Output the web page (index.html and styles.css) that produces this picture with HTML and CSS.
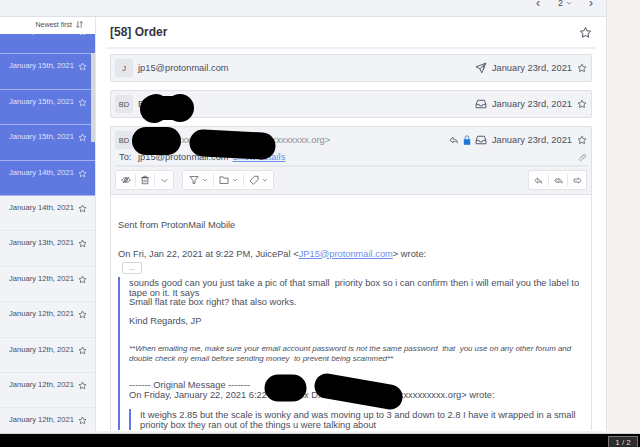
FILE: index.html
```html
<!DOCTYPE html>
<html lang="en">
<head>
  <meta charset="UTF-8" />
  <meta name="viewport" content="width=device-width, initial-scale=1.0"/>
  <title>[58] Order</title>
  <link rel="stylesheet" href="styles.css">
</head>
<body>

<svg class="defs" width="0" height="0" aria-hidden="true">
  <symbol id="i-star" viewBox="0 0 16 16"><path d="M8 1.8l1.9 4 4.4.6-3.2 3 .8 4.4L8 11.7l-3.900 2.100.8-4.400-3.200-3 4.400-.6z"/></symbol>
  <symbol id="i-plane" viewBox="0 0 16 16"><path d="M14.500 1.500L1.500 6.500l5 2.500 2.500 5.500zM6.500 9l8-7.500M11.500 4.500v5"/></symbol>
  <symbol id="i-inbox" viewBox="0 0 16 16"><path d="M1.500 8.500l2-5.500h9l2 5.500v4.500h-13zM1.500 8.500h4l1 2h3l1-2h4"/></symbol>
  <symbol id="i-reply" viewBox="0 0 16 16"><path d="M6.500 3.500L1.500 8l5 4.500V10c3 0 5 .5 7 2.500 0-3.500-2.500-6-7-6z"/></symbol>
  <symbol id="i-replyall" viewBox="0 0 16 16"><path d="M5 4L1 8l4 4M8.500 3.500L4 8l4.500 4.500V10c2.500 0 4 .5 6 2.500 0-3.500-2-6-6-6z"/></symbol>
  <symbol id="i-forward" viewBox="0 0 16 16"><path d="M9.500 3.500l5 4.500-5 4.500V10.500H2v-5h7.500z"/></symbol>
  <symbol id="i-clip" viewBox="0 0 16 16"><path d="M13.500 3c-1.500-1.500-3-1-4 0L3 9.500c-1.500 1.500-.5 4 1.500 4 .8 0 1.300-.3 2-1L13 6c1-1 1.500-1.800.5-3zM6 6.500l4 4M8.500 4l4 4"/></symbol>
  <symbol id="i-eye" viewBox="0 0 16 16"><path d="M1 8c3.500-5 10.500-5 14 0-3.500 5-10.500 5-14 0zM3 13L13 3"/><circle cx="8" cy="8" r="2.200"/></symbol>
  <symbol id="i-trash" viewBox="0 0 16 16"><path d="M3.500 4.500h9V14h-9zM2 4h12M6 4V2h4v2M6.500 7.500v4M9.500 7.500v4"/></symbol>
  <symbol id="i-chev" viewBox="0 0 16 16"><path d="M3 5.500l5 5 5-5"/></symbol>
  <symbol id="i-filter" viewBox="0 0 16 16"><path d="M1.500 2.500h13L9.500 9v4.500h-3V9z"/></symbol>
  <symbol id="i-folder" viewBox="0 0 16 16"><path d="M1.500 3h5l1.500 2h6.500v8.500h-13z"/></symbol>
  <symbol id="i-label" viewBox="0 0 16 16"><path d="M1.500 9.500L9 2h5.500v5.500L7 15zM11.500 4.500h.1"/></symbol>
  <symbol id="i-sort" viewBox="0 0 16 16"><path d="M5 2v11M2.500 10.500L5 13.500l2.500-3M11 14V3M8.500 5.500L11 2.500l2.500 3"/></symbol>
</svg>

<div class="app">
  <div class="window">
    <div class="topbar">
      <span class="nav">&#8249;</span>
      <span class="page-num">2 <svg class="ico ico-xs"><use href="#i-chev"/></svg></span>
      <span class="nav">&#8250;</span>
    </div>

    <div class="columns">
      <aside class="sidebar">
        <div class="sort">Newest first <svg class="ico ico-sm"><use href="#i-sort"/></svg></div>
        <div class="list">
          <div class="rows">
            <div class="row sel"><span>January 15th, 2021</span><svg class="ico ico-sm"><use href="#i-star"/></svg></div>
            <div class="row sel"><span>January 15th, 2021</span><svg class="ico ico-sm"><use href="#i-star"/></svg></div>
            <div class="row sel"><span>January 15th, 2021</span><svg class="ico ico-sm"><use href="#i-star"/></svg></div>
            <div class="row sel"><span>January 15th, 2021</span><svg class="ico ico-sm"><use href="#i-star"/></svg></div>
            <div class="row sel"><span>January 14th, 2021</span><svg class="ico ico-sm"><use href="#i-star"/></svg></div>
            <div class="row"><span>January 14th, 2021</span><svg class="ico ico-sm"><use href="#i-star"/></svg></div>
            <div class="row"><span>January 13th, 2021</span><svg class="ico ico-sm"><use href="#i-star"/></svg></div>
            <div class="row"><span>January 12th, 2021</span><svg class="ico ico-sm"><use href="#i-star"/></svg></div>
            <div class="row"><span>January 12th, 2021</span><svg class="ico ico-sm"><use href="#i-star"/></svg></div>
            <div class="row"><span>January 12th, 2021</span><svg class="ico ico-sm"><use href="#i-star"/></svg></div>
            <div class="row"><span>January 12th, 2021</span><svg class="ico ico-sm"><use href="#i-star"/></svg></div>
            <div class="row"><span>January 12th, 2021</span><svg class="ico ico-sm"><use href="#i-star"/></svg></div>
          </div>
          <div class="list-thumb"></div>
        </div>
      </aside>

      <main class="conversation">
        <div class="subject">
          <h1>[58] Order</h1>
          <svg class="ico ico-lg"><use href="#i-star"/></svg>
        </div>

        <div class="messages">
          <section class="msg-head">
            <div class="avatar">J</div>
            <div class="sender">jp15@protonmail.com</div>
            <svg class="ico"><use href="#i-plane"/></svg>
            <div class="date">January 23rd, 2021</div>
            <svg class="ico ico-sm2"><use href="#i-star"/></svg>
          </section>

          <section class="msg-head">
            <div class="avatar">BD</div>
            <div class="sender">B</div>
            <svg class="ico"><use href="#i-inbox"/></svg>
            <div class="date">January 23rd, 2021</div>
            <svg class="ico ico-sm2"><use href="#i-star"/></svg>
          </section>

          <section class="msg-open">
            <div class="open-head">
              <div class="from-row">
                <div class="avatar">BD</div>
                <div class="sender muted">Bxxx Dxxxxxxr &lt;xxxxxxxxxxxxxxxxxxxxxx.org&gt;</div>
                <svg class="ico ico-sm2"><use href="#i-reply"/></svg>
                <svg class="lock" viewBox="0 0 10 12"><path class="lock-body" d="M1 5h8v7H1z"/><path class="lock-bow" d="M2.800 5V3a2.200 2.200 0 0 1 4.400 0v2"/></svg>
                <svg class="ico"><use href="#i-inbox"/></svg>
                <div class="date">January 23rd, 2021</div>
                <svg class="ico ico-sm2"><use href="#i-star"/></svg>
              </div>
              <div class="to-row">
                <span class="to-label">To:</span>
                <span class="sender">jp15@protonmail.com</span>
                <a class="link" href="#">Show details</a>
                <svg class="ico ico-clip"><use href="#i-clip"/></svg>
              </div>
              <div class="toolbar">
                <div class="btn-group">
                  <button><svg class="ico ico-sm2"><use href="#i-eye"/></svg></button>
                  <button><svg class="ico ico-sm2"><use href="#i-trash"/></svg></button>
                  <button><svg class="ico ico-xs2"><use href="#i-chev"/></svg></button>
                </div>
                <div class="btn-group">
                  <button class="wide"><svg class="ico ico-sm2"><use href="#i-filter"/></svg><svg class="ico ico-xs"><use href="#i-chev"/></svg></button>
                  <button class="wide"><svg class="ico ico-sm2"><use href="#i-folder"/></svg><svg class="ico ico-xs"><use href="#i-chev"/></svg></button>
                  <button class="wide"><svg class="ico ico-sm2"><use href="#i-label"/></svg><svg class="ico ico-xs"><use href="#i-chev"/></svg></button>
                </div>
                <div class="btn-group push">
                  <button><svg class="ico ico-xs2"><use href="#i-reply"/></svg></button>
                  <button><svg class="ico ico-xs2"><use href="#i-replyall"/></svg></button>
                  <button><svg class="ico ico-xs2"><use href="#i-forward"/></svg></button>
                </div>
              </div>
            </div>

            <div class="body">
              <p class="sent">Sent from ProtonMail Mobile</p>
              <p class="wrote">On Fri, Jan 22, 2021 at 9:22 PM, JuicePal &lt;<a class="link" href="#">JP15@protonmail.com</a>&gt; wrote:</p>
              <button class="more">...</button>
              <blockquote class="quote">
                <p>sounds good can you just take a pic of that small&nbsp; priority box so i can confirm then i will email you the label to tape on it. It says<br>Small flat rate box right? that also works.</p>
                <p class="regards">Kind Regards, JP</p>
                <p class="warning">**When emailing me, make sure your email account password is not the same password&nbsp; that&nbsp; you use on any other forum and double check my email before sending money&nbsp; to prevent being scammed**</p>
                <p class="orig">------- Original Message -------<br>On Friday, January 22, 2021 6:22 PM, Bxxx Dxxxxxxr &lt;xxxxxxxxxxxxxxxxxxx.org&gt; wrote:</p>
                <blockquote class="quote inner">
                  <p>It weighs 2.85 but the scale is wonky and was moving up to 3 and down to 2.8 I have it wrapped in a small priority box they ran out of the things u were talking about</p>
                </blockquote>
              </blockquote>
            </div>
          </section>
        </div>
        <div class="main-thumb"></div>
      </main>
    </div>
  </div>
  <div class="side-gap"></div>
</div>

<div class="pager"><span class="pager-box">1 / 2</span></div>

<!-- redaction scribbles drawn over the screenshot -->
<svg class="redact" viewBox="0 0 640 447" aria-hidden="true">
  <path stroke-width="28" d="M154 109L156 108M180 108h0"/>
  <path stroke-width="24" d="M156 108L180 108"/>
  <path stroke-width="28" d="M146 141L167 141"/>
  <path stroke-width="27" d="M203 143L262 146"/>
  <path stroke-width="27" d="M278 388L293 388"/>
  <path stroke-width="25" d="M327 386L390 397"/>
</svg>

</body>
</html>
```

FILE: styles.css
```css
* {
  box-sizing: border-box;
}

html, body {
  height: 100%;
}

body {
  margin: 0;
  position: relative;
  height: 447px;
  overflow: hidden;
  font-family: "Liberation Sans", Arial, sans-serif;
  font-size: 9.3px;
  color: #4b4e5b;
  background: #000;
}

p {
  margin: 0;
}

.defs {
  position: absolute;
}

.ico {
  width: 12px;
  height: 12px;
  flex: none;
  fill: none;
  stroke: #4b4e5b;
  stroke-width: 1.2;
}

.ico-xs { width: 6px; height: 6px; stroke-width: 1.6; }
.ico-xs2 { width: 9px; height: 9px; }
.ico-sm { width: 9px; height: 9px; }
.ico-sm2 { width: 10px; height: 10px; }
.ico-lg { width: 13px; height: 13px; }
.ico-clip { width: 9px; height: 9px; stroke: #8b8e9a; }

.app {
  display: flex;
  height: 434px;
  background: #f5f3f1;
  border-bottom: 1px solid #d8d6d2;
}

.window {
  width: 607px;
  height: 431px;
  display: flex;
  flex-direction: column;
  background: #fff;
  border-right: 1px solid #e4e5ea;
}

.side-gap {
  flex: 1;
}

.topbar {
  height: 17px;
  flex: none;
  display: flex;
  justify-content: flex-end;
  gap: 16px;
  padding-right: 11px;
  overflow: hidden;
  line-height: 6px;
  background: #f2f3f6;
  border-bottom: 1px solid #dde0e7;
}

.nav {
  font-size: 12px;
  width: 8px;
  text-align: center;
}

.page-num {
  width: 13px;
  display: flex;
  gap: 3px;
  font-size: 9px;
}

.columns {
  flex: 1;
  display: flex;
  min-height: 0;
}

.sidebar {
  width: 96px;
  flex: none;
  display: flex;
  flex-direction: column;
  border-right: 1px solid #e4e5ea;
}

.sort {
  height: 17px;
  flex: none;
  display: flex;
  justify-content: flex-end;
  align-items: flex-start;
  gap: 3px;
  padding: 3px 11px 0 0;
  font-size: 7px;
  line-height: 9px;
}

.list {
  flex: 1;
  position: relative;
  overflow: hidden;
  background: #f2f3f6;
}

.rows {
  margin-top: -15px;
}

.row {
  height: 35.4px;
  display: flex;
  justify-content: flex-end;
  gap: 4px;
  padding: 7px 8px 0 0;
  font-size: 7.6px;
  line-height: 9px;
  border-bottom: 1px solid #e7e8ec;
}

.row svg {
  margin-top: 1px;
}

.row.sel {
  background: #5f79e1;
  color: #dde3fa;
  border-bottom-color: #a3b2ee;
}

.row.sel .ico {
  stroke: #e6eafb;
}

.list-thumb {
  position: absolute;
  right: 0;
  top: 19px;
  width: 4px;
  height: 89px;
  background: #d5d7dd;
}

.conversation {
  flex: 1;
  position: relative;
  min-width: 0;
  padding: 0 10px;
}

.subject {
  height: 32px;
  display: flex;
  justify-content: space-between;
  align-items: center;
  padding: 0 4px;
  border-bottom: 2px solid #eff0f3;
}

.subject h1 {
  margin: 0;
  font-size: 12px;
  font-weight: bold;
  color: #33353f;
}

.messages {
  padding: 5px 4px 0;
}

.msg-head {
  height: 28px;
  margin-bottom: 8px;
  display: flex;
  align-items: center;
  gap: 4px;
  padding: 0 4px;
  background: #f2f3f6;
  border: 1px solid #dfe1e8;
  border-radius: 2px;
}

.avatar {
  width: 18px;
  height: 18px;
  flex: none;
  display: flex;
  align-items: center;
  justify-content: center;
  font-size: 7.5px;
  background: #e6e7ec;
  border-radius: 2px;
}

.sender {
  flex: 1;
  margin-left: 1px;
}

.muted {
  color: #8b8e9a;
}

.date {
  margin: 0 1px;
}

.msg-open {
  height: 304px;
  border: 1px solid #dfe1e8;
  border-bottom: 0;
  overflow: hidden;
}

.open-head {
  background: #f2f3f6;
  padding: 4px 4px 0;
  border-bottom: 1px solid #dfe1e8;
}

.from-row {
  height: 18px;
  display: flex;
  align-items: center;
  gap: 4px;
}

.lock {
  width: 8px;
  height: 10px;
}

.lock-body {
  fill: #1a78d6;
}

.lock-bow {
  fill: none;
  stroke: #1a78d6;
}

.to-row {
  height: 18px;
  display: flex;
  align-items: center;
  border-bottom: 2px solid #e6e7ec;
}

.to-label {
  width: 23px;
  padding-left: 4px;
}

.to-row .sender {
  flex: none;
  margin: 0 4px 0 0;
}

.to-row .ico-clip {
  margin-left: auto;
}

.link {
  color: #6f8cf0;
  text-decoration: underline;
}

.to-row .link {
  flex: 1;
}

.toolbar {
  height: 27px;
  display: flex;
  align-items: flex-start;
  gap: 8px;
  padding-top: 3px;
}

.btn-group {
  height: 20px;
  display: flex;
  align-items: center;
  padding: 0 0;
  background: #fff;
  border: 1px solid #e2e4ea;
  border-radius: 2px;
}

.btn-group.push {
  margin-left: auto;
}

.btn-group button {
  width: 19px;
  height: 12px;
  display: flex;
  align-items: center;
  justify-content: center;
  gap: 3px;
  padding: 0;
  background: none;
  border: 0;
  border-left: 1px solid #e6e7ec;
}

.btn-group button:first-child {
  border-left: 0;
}

.btn-group button.wide {
  width: 30px;
}

.body {
  padding: 26px 7px 0;
  line-height: 9.5px;
  background: #fff;
}

.wrote {
  margin-top: 19px;
}

.more {
  display: block;
  width: 20px;
  height: 12px;
  margin: 3px 0 3px 4px;
  padding: 0;
  font: 8px "Liberation Sans", sans-serif;
  line-height: 8px;
  color: #8b8e9a;
  background: #fff;
  border: 1px solid #d6d8de;
  border-radius: 2px;
}

.quote {
  margin: 0;
  padding: 2px 0 0 9px;
  border-left: 2px solid #5f79e1;
}

.regards {
  margin-top: 9px;
}

.warning {
  margin-top: 18px;
  font-size: 7.9px;
  font-style: italic;
}

.orig {
  margin-top: 18px;
}

.inner {
  margin-top: 9px;
  padding: 2px 0 0 9px;
}

.pager {
  height: 12px;
  display: flex;
  justify-content: flex-end;
  padding: 2px 2px 0 0;
}

.pager-box {
  width: 30px;
  height: 12px;
  color: #ddd;
  font-size: 8px;
  line-height: 11px;
  text-align: center;
  background: #2c2c2c;
  border: 1px solid #777;
  border-bottom: 0;
}

.redact {
  position: absolute;
  left: 0;
  top: 0;
  width: 640px;
  height: 447px;
  fill: none;
  stroke: #000;
  stroke-linecap: round;
}
```
